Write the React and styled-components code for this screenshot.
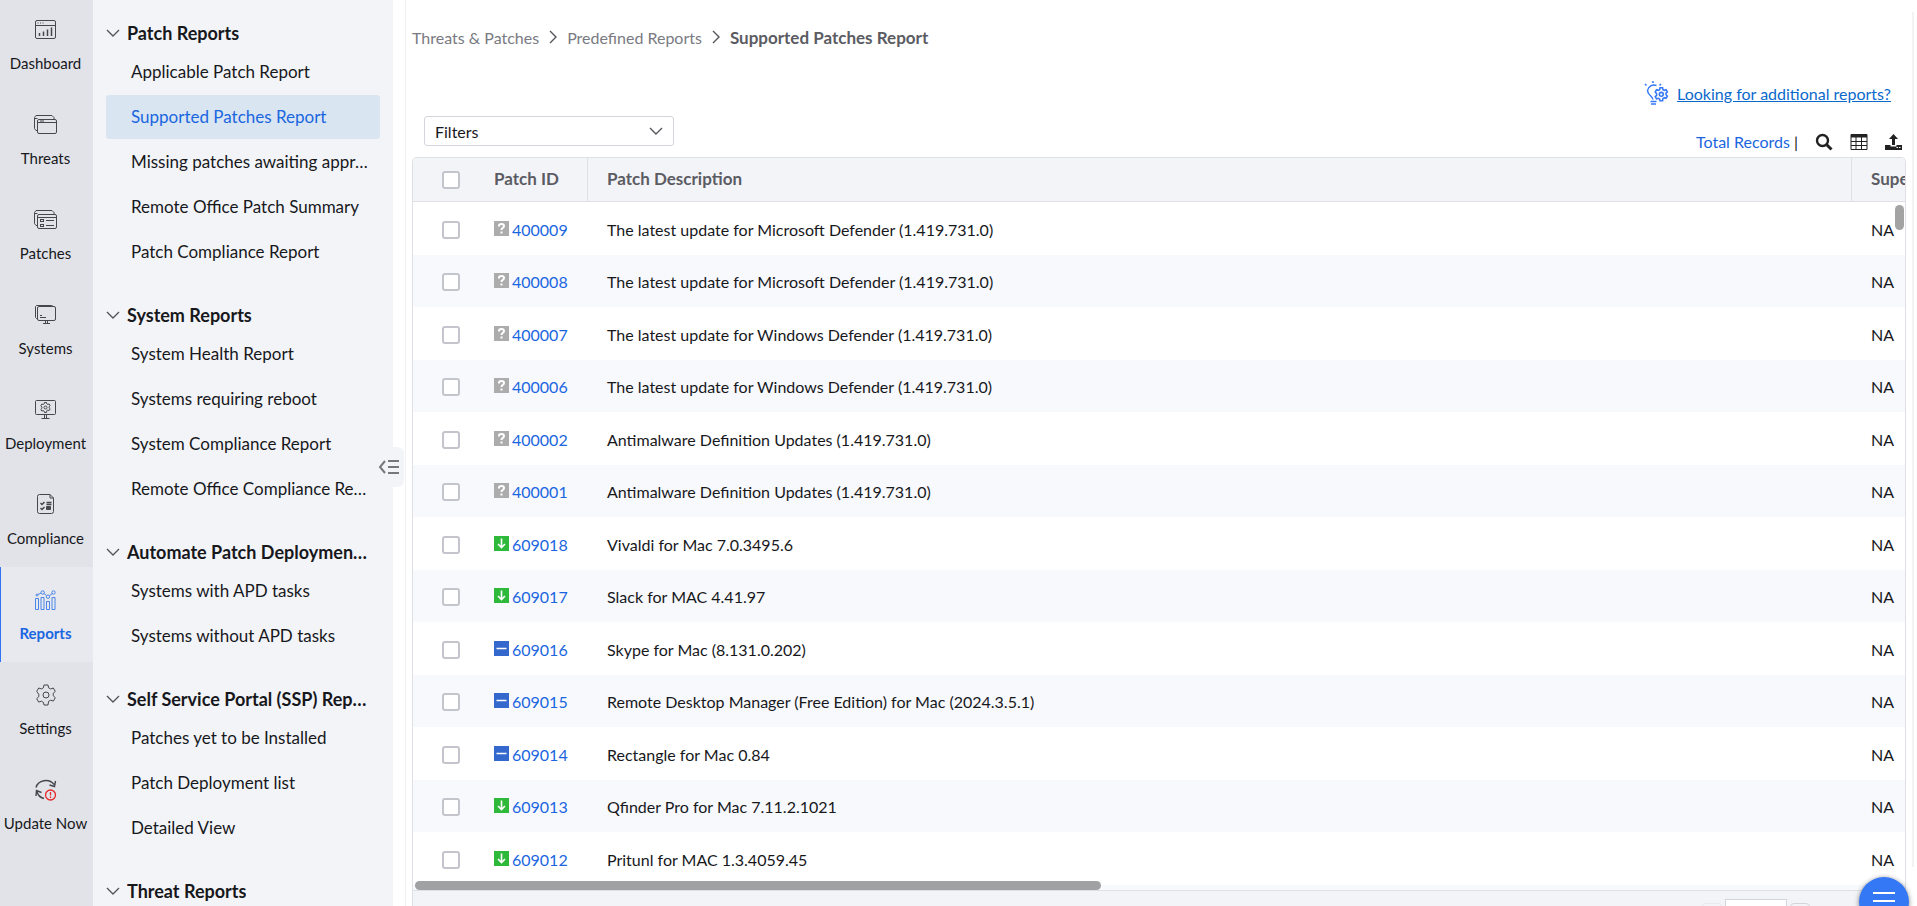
import styled, { createGlobalStyle, css } from "styled-components";

const GlobalStyle = createGlobalStyle`
  * {
    box-sizing: border-box;
  }
  body {
    margin: 0;
    font-family: Lato, sans-serif;
    font-size: 16px;
    color: #17181c;
    background: #fff;
  }
`;

const Page = styled.div`
  display: flex;
  height: 100vh;
  overflow: hidden;
`;

const Rail = styled.nav`
  flex: 0 0 93px;
  background: #e2e3e8;
`;

const RailList = styled.div`
  margin-top: -3px;
`;

const RailItem = styled.a`
  display: flex;
  flex-direction: column;
  align-items: center;
  gap: 11px;
  height: 95px;
  padding-top: 21px;
  padding-right: 3px;
  border-left: 1px solid transparent;
  color: #17181c;
  font-size: 15px;
  line-height: 20px;
  white-space: nowrap;
  text-decoration: none;
  ${({ $active }) =>
    $active &&
    css`
      background: #e8e9ee;
      border-left-color: #2f74f2;
      color: #1a66e0;
      font-weight: 700;
    `}
`;

const RailIcon = styled.svg`
  width: 24px;
  height: 24px;
  fill: none;
  stroke: ${({ $color }) => $color || "#45474d"};
  stroke-width: 1;
`;

const SidePanel = styled.aside`
  position: relative;
  flex: 0 0 300px;
  min-width: 0;
  padding: 16px 13px 0;
  background: #f3f4f8;
`;

const Group = styled.section`
  margin-bottom: 24px;
`;

const GroupTitle = styled.button`
  display: flex;
  align-items: center;
  gap: 7px;
  width: 100%;
  height: 34px;
  padding: 0 11px 1px 0;
  border: none;
  background: none;
  color: #17181c;
  font-family: inherit;
  font-size: 18px;
  font-weight: 700;
`;

const Ellipsis = styled.span`
  overflow: hidden;
  white-space: nowrap;
  text-overflow: ellipsis;
`;

const ReportLink = styled.a`
  display: block;
  margin-bottom: 1px;
  padding: 0 9px 1px 25px;
  border-radius: 3px;
  overflow: hidden;
  white-space: nowrap;
  text-overflow: ellipsis;
  text-decoration: none;
  font-size: 17px;
  line-height: 43px;
  color: ${({ $active }) => ($active ? "#1a66e0" : "#17181c")};
  background: ${({ $active }) => ($active ? "#d9e5f1" : "transparent")};
`;

const CollapseButton = styled.button`
  position: absolute;
  top: 447px;
  right: -11px;
  display: flex;
  align-items: center;
  justify-content: center;
  width: 30px;
  height: 40px;
  padding: 0;
  border: none;
  border-radius: 6px;
  background: #f3f4f8;
`;

const Main = styled.main`
  flex: 1;
  min-width: 0;
  display: flex;
  flex-direction: column;
  margin-left: 12px;
  padding: 25px 11px 0 6px;
  border-left: 1px solid #f0f0f3;
`;

const Breadcrumb = styled.nav`
  display: flex;
  align-items: center;
  gap: 10px;
  height: 24px;
  color: #5b5c63;
`;

const Crumb = styled.a`
  color: #797a82;
  text-decoration: none;
`;

const CurrentCrumb = styled.span`
  font-size: 17px;
  font-weight: 700;
`;

const HelpRow = styled.div`
  display: flex;
  justify-content: flex-end;
  align-items: center;
  gap: 8px;
  height: 24px;
  margin-top: 32px;
  padding-right: 15px;
`;

const HelpLink = styled.a`
  color: #0b69cc;
`;

const Toolbar = styled.div`
  display: flex;
  justify-content: space-between;
  align-items: flex-start;
  height: 41px;
  margin-top: 11px;
  padding-left: 12px;
`;

const FilterBox = styled.div`
  display: flex;
  align-items: center;
  width: 250px;
  height: 30px;
  padding-right: 10px;
  border: 1px solid #d5d6dc;
  border-radius: 3px;
`;

const FilterSelect = styled.select`
  flex: 1;
  padding: 0 0 0 10px;
  appearance: none;
  border: none;
  outline: none;
  background: none;
  color: #17181c;
  font-family: inherit;
  font-size: 16px;
`;

const Tools = styled.div`
  display: flex;
  align-items: center;
  gap: 17px;
  padding: 16px 4px 0 0;
`;

const Total = styled.span`
  line-height: 20px;
`;

const TotalLink = styled.a`
  color: #1a66e0;
  text-decoration: none;
`;

const IconButton = styled.button`
  display: flex;
  padding: 0;
  border: none;
  background: none;
  color: #222;
`;

const GridFrame = styled.div`
  position: relative;
  flex: 1;
  min-height: 0;
  display: flex;
  flex-direction: column;
  border: 1px solid #dfe0e6;
  border-bottom: none;
  border-radius: 5px 5px 0 0;
  overflow: hidden;
`;

const GridScroll = styled.div`
  flex: 1;
  min-height: 0;
  overflow: hidden;
`;

const Table = styled.table`
  width: 100%;
  border-collapse: separate;
  border-spacing: 0;
  table-layout: fixed;
`;

const Row = styled.tr`
  height: 53px;
  &:nth-child(even) {
    height: 52px;
    background: #f8f9fd;
  }
`;

const HeadCell = styled.th`
  width: ${({ $width }) => $width};
  height: 44px;
  padding: 0 0 3px ${({ $pad }) => $pad || "19px"};
  overflow: hidden;
  background: #f3f4f8;
  border-bottom: 1px solid #dfe0e6;
  border-left: ${({ $line }) => ($line ? "1px solid #dfe0e6" : "none")};
  color: #5b5c63;
  font-size: 17px;
  text-align: left;
  white-space: nowrap;
`;

const Cell = styled.td`
  padding: 1px 0 0 ${({ $pad }) => $pad || "20px"};
  overflow: hidden;
  white-space: nowrap;
`;

const Tick = styled.input`
  display: block;
  appearance: none;
  width: 18px;
  height: 18px;
  margin: 1px 0 0;
  border: 2px solid #c4c5cc;
  border-radius: 3px;
  background: #fff;
`;

const HeadTick = styled(Tick)`
  margin-top: 3px;
`;

const PatchCell = styled.div`
  display: flex;
  align-items: center;
  gap: 3px;
`;

const PatchLink = styled.a`
  color: #1a66e0;
  text-decoration: none;
`;

const StatusIcon = styled.svg`
  width: 15px;
  height: 15px;
  margin-bottom: 2px;
`;

const ScrollThumbX = styled.div`
  position: absolute;
  left: 2px;
  bottom: 16px;
  width: 46%;
  height: 9px;
  border-radius: 5px;
  background: #a0a1a2;
`;

const ScrollThumbY = styled.div`
  position: absolute;
  top: 47px;
  right: 1px;
  width: 9px;
  height: 25px;
  border-radius: 5px;
  background: #a3a3a3;
`;

const Pager = styled.div`
  display: flex;
  justify-content: flex-end;
  gap: 3px;
  height: 16px;
  padding: 8px 95px 0 0;
  border-top: 1px solid #dfe0e6;
  background: #f3f4f8;
  overflow: hidden;
`;

const PageButton = styled.button`
  width: 20px;
  height: 20px;
  margin-top: 4px;
  border: 1px solid ${({ disabled }) => (disabled ? "#e8e9ee" : "#d5d6dc")};
  border-radius: 4px;
  background: none;
`;

const PageSize = styled.input`
  width: 62px;
  height: 28px;
  border: 1px solid #d5d6dc;
  background: #fff;
`;

const Edge = styled.div`
  flex: 0 0 2px;
  margin: 12px 3px 39px -5px;
  background: #f3f3f6;
`;

const MenuButton = styled.button`
  position: fixed;
  right: 8px;
  bottom: -21px;
  width: 50px;
  height: 50px;
  padding: 0;
  border: none;
  border-radius: 50%;
  background: #3478f6;
  box-shadow: 0 1px 5px rgba(0, 0, 0, 0.5);
`;

const ChevronIcon = styled.svg`
  flex-shrink: 0;
  fill: none;
  stroke: #55565c;
  stroke-width: 1.4;
`;

const gear =
  "M10 2h4l.6 2.8 2 1.1 2.7-.9 2 3.4-2.1 1.9v2.4l2.1 2-2 3.4-2.7-.9-2 1.1L14 22h-4l-.6-2.7-2-1.1-2.7.9-2-3.4 2.1-2v-2.4L2.7 8.4l2-3.4 2.7.9 2-1.1z";

const navItems = [
  {
    label: "Dashboard",
    icon: (
      <>
        <rect x="1.5" y="2.5" width="20" height="18" rx="1.5" />
        <path d="M1.5 7.5h20M3.5 5h1M6 5h1M8.5 5h1" />
        <path d="M5.5 15v3M9.5 13.5v4.5M13.5 11.5v6.5M17.5 9.5v8.5" strokeWidth="1.5" />
      </>
    ),
  },
  {
    label: "Threats",
    icon: (
      <>
        <rect x="3.5" y="6.5" width="19" height="14" rx="1.5" />
        <path d="M3.5 9.5h19M6 8h4M3.5 17.5h-1.5l-1.5-2v-11l1.5-2h16l2 2v2M.5 5.5h3" />
      </>
    ),
  },
  {
    label: "Patches",
    icon: (
      <>
        <rect x="3.5" y="6.5" width="19" height="14" rx="1.5" />
        <path d="M3.5 9.5h19M3.5 17.5h-1.5l-1.5-2v-11l1.5-2h16l2 2v2M.5 5.5h3" />
        <rect x="6.5" y="11.5" width="3" height="2" />
        <rect x="6.5" y="16.5" width="3" height="2" />
        <path d="M12 12.5h8M12 17.5h8" />
      </>
    ),
  },
  {
    label: "Systems",
    icon: (
      <>
        <rect x="3.5" y="3.5" width="18" height="14" rx="1.5" />
        <path d="M3.5 15.5h-1l-1-1v-11l1-1h15l2 1M6 12.5h2M6 14.5h6M11.5 17.5v3M13.5 17.5v3M9 20.5h7" />
      </>
    ),
  },
  {
    label: "Deployment",
    icon: (
      <>
        <rect x="1.5" y="2.5" width="20" height="14" rx="1" />
        <path d="M10.5 17v3M12.5 17v3M7.5 20.5h8" />
        <g transform="translate(5.5 3.5) scale(.5)" strokeWidth="2">
          <path d={gear} />
          <circle cx="12" cy="12" r="3" />
        </g>
      </>
    ),
  },
  {
    label: "Compliance",
    icon: (
      <>
        <path d="M16 1.5H5.5a2 2 0 0 0-2 2v15a2 2 0 0 0 2 2h12a2 2 0 0 0 2-2V5zM16 1.5V5h3.5" />
        <path d="M6.5 10l1.5 1.5 2.5-2.5M6.5 15l1.5 1.5 2.5-2.5M12.5 9.5h5M12.5 11.5h5" strokeWidth="1.5" />
        <path d="M12.5 13.5h4v3h-4z" fill="#45474d" />
      </>
    ),
  },
  {
    label: "Reports",
    active: true,
    icon: (
      <>
        <path d="M1.5 10.5v11h3v-11zM7 9.5v12h3v-12zM12.5 13.5v8h3v-8zM18 9.5v12h3v-12z" />
        <circle cx="3" cy="7" r="1" />
        <circle cx="8.7" cy="4.5" r="1.7" />
        <circle cx="14" cy="8.7" r="1.7" />
        <circle cx="19.5" cy="4.5" r="1.7" />
        <path d="M4 6.5L7 5M10 5.5l2.5 2M15.5 7.5L18.5 5.5" />
      </>
    ),
  },
  {
    label: "Settings",
    icon: (
      <>
        <path d={gear} />
        <circle cx="12" cy="12" r="3" />
      </>
    ),
  },
  {
    label: "Update Now",
    icon: (
      <>
        <path d="M2 9.5a10 9 0 0 1 18-3M21.5 3l-1 5.5-5-1.5M2 18l.5-5.5 5 2M3 13.5a10 9 0 0 0 7 7" strokeWidth="1.4" />
        <g stroke="#e5262b" strokeWidth="1.3">
          <circle cx="16.5" cy="17" r="5" fill="#e2e3e8" />
          <path d="M16.5 14v3.5M16.5 18.5v1.5" />
        </g>
      </>
    ),
  },
];

const groups = [
  {
    title: "Patch Reports",
    items: [
      "Applicable Patch Report",
      "Supported Patches Report",
      "Missing patches awaiting approval",
      "Remote Office Patch Summary",
      "Patch Compliance Report",
    ],
  },
  {
    title: "System Reports",
    items: [
      "System Health Report",
      "Systems requiring reboot",
      "System Compliance Report",
      "Remote Office Compliance Report",
    ],
  },
  {
    title: "Automate Patch Deployment Reports",
    items: ["Systems with APD tasks", "Systems without APD tasks"],
  },
  {
    title: "Self Service Portal (SSP) Reports",
    items: ["Patches yet to be Installed", "Patch Deployment list", "Detailed View"],
  },
  { title: "Threat Reports", items: [] },
];

const patches = [
  ["400009", "unknown", "The latest update for Microsoft Defender (1.419.731.0)"],
  ["400008", "unknown", "The latest update for Microsoft Defender (1.419.731.0)"],
  ["400007", "unknown", "The latest update for Windows Defender (1.419.731.0)"],
  ["400006", "unknown", "The latest update for Windows Defender (1.419.731.0)"],
  ["400002", "unknown", "Antimalware Definition Updates (1.419.731.0)"],
  ["400001", "unknown", "Antimalware Definition Updates (1.419.731.0)"],
  ["609018", "download", "Vivaldi for Mac 7.0.3495.6"],
  ["609017", "download", "Slack for MAC 4.41.97"],
  ["609016", "none", "Skype for Mac (8.131.0.202)"],
  ["609015", "none", "Remote Desktop Manager (Free Edition) for Mac (2024.3.5.1)"],
  ["609014", "none", "Rectangle for Mac 0.84"],
  ["609013", "download", "Qfinder Pro for Mac 7.11.2.1021"],
  ["609012", "download", "Pritunl for MAC 1.3.4059.45"],
];

const statuses = {
  unknown: {
    color: "#acacac",
    path: "M5 5.5V4.5q0-1.5 2.5-1.5T10 5q0 1-1.2 1.8Q7.5 7.5 7.5 9M7.5 10.5v2",
    width: 2,
  },
  download: { color: "#2fb93b", path: "M7.5 2.5v9M4 8l3.5 3.5L11 8", width: 1.6 },
  none: { color: "#3568cc", path: "M2.5 7.5h10", width: 1.5 },
};

const Chevron = ({ right }) => (
  <ChevronIcon width={right ? 8 : 14} height={right ? 14 : 8}>
    <path d={right ? "M1 1l6 6-6 6" : "M1 1l6 6 6-6"} />
  </ChevronIcon>
);

const Status = ({ kind }) => {
  const { color, path, width } = statuses[kind];
  return (
    <StatusIcon viewBox="0 0 15 15" fill="none" stroke="#fff" strokeWidth={width}>
      <rect width="15" height="15" fill={color} stroke="none" />
      <path d={path} />
    </StatusIcon>
  );
};

const App = () => {
  return (
    <Page>
      <GlobalStyle />
      <Rail>
        <RailList>
          {navItems.map(({ label, icon, active }) => (
            <RailItem key={label} href="#" $active={active}>
              <RailIcon viewBox="0 0 24 24" $color={active && "#4a86e8"}>
                {icon}
              </RailIcon>
              {label}
            </RailItem>
          ))}
        </RailList>
      </Rail>
      <SidePanel>
        {groups.map(({ title, items }) => (
          <Group key={title}>
            <GroupTitle>
              <Chevron />
              <Ellipsis>{title}</Ellipsis>
            </GroupTitle>
            {items.map((item) => (
              <ReportLink key={item} href="#" $active={item === "Supported Patches Report"}>
                {item}
              </ReportLink>
            ))}
          </Group>
        ))}
        <CollapseButton aria-label='Collapse menu'>
          <svg width="22" height="18" fill="none" stroke="#77787e" strokeWidth="2">
            <path d="M7 3L2 9l5 6M10 3h11M10 9h11M10 15h11" />
          </svg>
        </CollapseButton>
      </SidePanel>
      <Main>
        <Breadcrumb>
          <Crumb href="#">Threats & Patches</Crumb>
          <Chevron right />
          <Crumb href="#">Predefined Reports</Crumb>
          <Chevron right />
          <CurrentCrumb>Supported Patches Report</CurrentCrumb>
        </Breadcrumb>
        <HelpRow>
          <svg width="25" height="24" fill="none" stroke="#3478f6" strokeWidth="1.5">
            <path d="M9 18.5C8.5 15 3.5 14 3.5 9.5a6.5 6.5 0 0 1 9-5M6.5 20.5h6M7 23h5M9 0v2M1 3l1.5 1.5M17 3l-1.5 1.5" />
            <g transform="translate(9.5 5.5) scale(.65)" strokeWidth="2.4">
              <path d={gear} />
              <circle cx="12" cy="12" r="3" />
            </g>
          </svg>
          <HelpLink href="#">Looking for additional reports?</HelpLink>
        </HelpRow>
        <Toolbar>
          <FilterBox>
            <FilterSelect aria-label='Filters'>
              <option>Filters</option>
            </FilterSelect>
            <Chevron />
          </FilterBox>
          <Tools>
            <Total>
              <TotalLink href="#">Total Records</TotalLink> |
            </Total>
            <IconButton aria-label='Search'>
              <svg width="18" height="18" fill="none" stroke="currentColor">
                <circle cx="7.5" cy="7.5" r="5.5" strokeWidth="2.4" />
                <path d="M11.5 11.5l5 5" strokeWidth="3" />
              </svg>
            </IconButton>
            <IconButton aria-label='Columns'>
              <svg width="18" height="16" fill="none" stroke="currentColor">
                <path d="M1 .5h16v15H1zM1 7.5h16M1 11.5h16M6 3v12M11.5 3v12" />
                <path d="M1 2h16" strokeWidth="3" />
              </svg>
            </IconButton>
            <IconButton aria-label='Export'>
              <svg width="17" height="16" fill="currentColor">
                <path d="M8.5 0L13 5h-3v6H7V5H4zM0 11h5.5v1.5h6V11H17v5H0z" />
                <path d="M11.5 13.5h1.5M14 13.5h1.5" stroke="#fff" />
              </svg>
            </IconButton>
          </Tools>
        </Toolbar>
        <GridFrame>
          <GridScroll>
            <Table>
              <thead>
                <tr>
                  <HeadCell $width="61px" $pad="29px">
                    <HeadTick type="checkbox" aria-label='Select all' />
                  </HeadCell>
                  <HeadCell $width="113px" $pad="20px">
                    Patch ID
                  </HeadCell>
                  <HeadCell $line>Patch Description</HeadCell>
                  <HeadCell $width="54px" $line>
                    Superseded
                  </HeadCell>
                </tr>
              </thead>
              <tbody>
                {patches.map(([id, kind, description]) => (
                  <Row key={id}>
                    <Cell $pad="29px">
                      <Tick type="checkbox" aria-label={id} />
                    </Cell>
                    <Cell>
                      <PatchCell>
                        <Status kind={kind} />
                        <PatchLink href="#">{id}</PatchLink>
                      </PatchCell>
                    </Cell>
                    <Cell>{description}</Cell>
                    <Cell>NA</Cell>
                  </Row>
                ))}
                <Row>
                  <Cell colSpan={4} />
                </Row>
              </tbody>
            </Table>
          </GridScroll>
          <Pager>
            <PageButton disabled aria-label='Previous page' />
            <PageSize aria-label='Page' />
            <PageButton aria-label='Next page' />
          </Pager>
          <ScrollThumbX />
          <ScrollThumbY />
        </GridFrame>
      </Main>
      <Edge />
      <MenuButton aria-label='Menu'>
        <svg width="22" height="18" stroke="#fff" strokeWidth="2">
          <path d="M0 1h22M0 9h22M0 17h22" />
        </svg>
      </MenuButton>
    </Page>
  );
};

export default App;
